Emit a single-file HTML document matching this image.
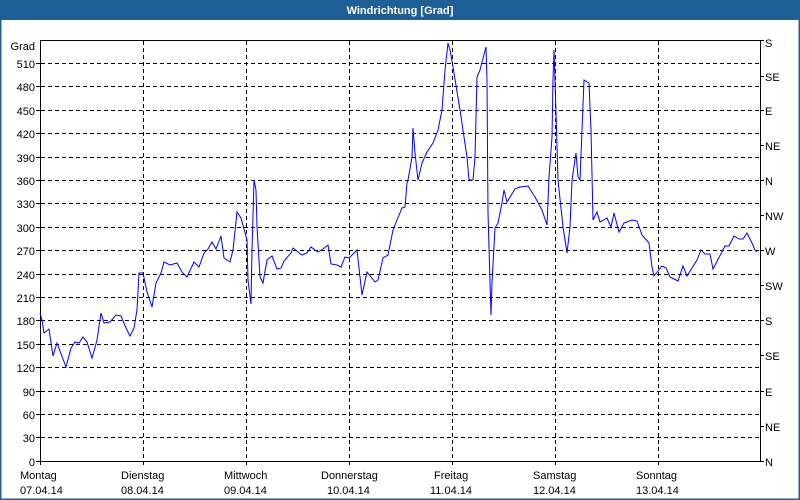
<!DOCTYPE html>
<html><head><meta charset="utf-8"><style>
html,body{margin:0;padding:0;background:#fff}
body{width:800px;height:500px;overflow:hidden;position:relative;font-family:"Liberation Sans",sans-serif}
</style></head><body>
<svg width="800" height="500" xmlns="http://www.w3.org/2000/svg" style="position:absolute;left:0;top:0">
<rect x="0" y="0" width="800" height="500" fill="#fff"/>
<rect x="0.5" y="0.5" width="799" height="499" fill="none" stroke="#1e6096" stroke-width="2"/>
<rect x="0" y="0" width="800" height="20" fill="#1e6096"/>
<text x="400" y="14" fill="#fff" font-size="11" font-weight="bold" text-anchor="middle">Windrichtung [Grad]</text>
<g stroke="#000" stroke-dasharray="4,3" stroke-width="1">
<line x1="41" x2="760" y1="63.5" y2="63.5"/><line x1="41" x2="760" y1="86.5" y2="86.5"/><line x1="41" x2="760" y1="110.5" y2="110.5"/><line x1="41" x2="760" y1="133.5" y2="133.5"/><line x1="41" x2="760" y1="157.5" y2="157.5"/><line x1="41" x2="760" y1="180.5" y2="180.5"/><line x1="41" x2="760" y1="203.5" y2="203.5"/><line x1="41" x2="760" y1="227.5" y2="227.5"/><line x1="41" x2="760" y1="250.5" y2="250.5"/><line x1="41" x2="760" y1="274.5" y2="274.5"/><line x1="41" x2="760" y1="297.5" y2="297.5"/><line x1="41" x2="760" y1="320.5" y2="320.5"/><line x1="41" x2="760" y1="344.5" y2="344.5"/><line x1="41" x2="760" y1="367.5" y2="367.5"/><line x1="41" x2="760" y1="391.5" y2="391.5"/><line x1="41" x2="760" y1="414.5" y2="414.5"/><line x1="41" x2="760" y1="437.5" y2="437.5"/>
<line y1="41" y2="461" x1="143.5" x2="143.5"/><line y1="41" y2="461" x1="246.5" x2="246.5"/><line y1="41" y2="461" x1="349.5" x2="349.5"/><line y1="41" y2="461" x1="452.5" x2="452.5"/><line y1="41" y2="461" x1="555.5" x2="555.5"/><line y1="41" y2="461" x1="658.5" x2="658.5"/>
</g>
<g stroke="#000" fill="none">
<path d="M40.5 40 V461.5 H760.5 V40 M40 40.5 H760.5"/>
<path d="M36 63.5h4M36 86.5h4M36 110.5h4M36 133.5h4M36 157.5h4M36 180.5h4M36 203.5h4M36 227.5h4M36 250.5h4M36 274.5h4M36 297.5h4M36 320.5h4M36 344.5h4M36 367.5h4M36 391.5h4M36 414.5h4M36 437.5h4M36 461.5h4"/>
<path d="M760 76.5h4M760 110.5h4M760 145.5h4M760 180.5h4M760 215.5h4M760 250.5h4M760 285.5h4M760 320.5h4M760 355.5h4M760 391.5h4M760 426.5h4M760 461.5h4M760 40.5h4"/>
<path d="M40.5 461v4M143.5 461v4M246.5 461v4M349.5 461v4M452.5 461v4M555.5 461v4M658.5 461v4"/>
</g>
<g font-size="11" fill="#000" text-anchor="end">
<text x="35" y="50">Grad</text>
<text x="35" y="68">510</text><text x="35" y="91">480</text><text x="35" y="115">450</text><text x="35" y="138">420</text><text x="35" y="162">390</text><text x="35" y="185">360</text><text x="35" y="208">330</text><text x="35" y="232">300</text><text x="35" y="255">270</text><text x="35" y="279">240</text><text x="35" y="302">210</text><text x="35" y="325">180</text><text x="35" y="349">150</text><text x="35" y="372">120</text><text x="35" y="396">90</text><text x="35" y="419">60</text><text x="35" y="442">30</text><text x="35" y="466">0</text>
</g>
<g font-size="11" fill="#000">
<text x="765" y="47">S</text><text x="765" y="81">SE</text><text x="765" y="115">E</text><text x="765" y="150">NE</text><text x="765" y="185">N</text><text x="765" y="220">NW</text><text x="765" y="255">W</text><text x="765" y="290">SW</text><text x="765" y="325">S</text><text x="765" y="360">SE</text><text x="765" y="396">E</text><text x="765" y="431">NE</text><text x="765" y="466">N</text>
</g>
<g font-size="11" fill="#000">
<text x="20" y="479">Montag</text><text x="20" y="494">07.04.14</text>
<text x="121" y="479">Dienstag</text><text x="121" y="494">08.04.14</text>
<text x="224" y="479">Mittwoch</text><text x="224" y="494">09.04.14</text>
<text x="321" y="479">Donnerstag</text><text x="327" y="494">10.04.14</text>
<text x="434" y="479">Freitag</text><text x="430" y="494">11.04.14</text>
<text x="533" y="479">Samstag</text><text x="533" y="494">12.04.14</text>
<text x="636" y="479">Sonntag</text><text x="636" y="494">13.04.14</text>
</g>
<polyline fill="none" stroke="#0000ff" stroke-width="1" points="40,313 42,320 44,333 49,329 53,356 57,343 66,367 71,348 75,342 79,343 83,337 87,342 92,358 97,340 101,313 104,323 110,322 116,315 121,316 126,328 130,336 134,328 137,310 139,273 143,273 147,292 152,307 156,283 161,273 164,262 170,265 177,263 182,272 187,277 194,262 199,267 204,253 208,249 212,242 216,249 221,236 224,258 230,262 233,250 237,212 241,218 247,240 248,280 251,304 252,250 254,180 256,190 257,227 260,277 263,283 267,260 272,256 277,269 281,268 284,261 291,253 293,248 302,255 307,253 311,247 318,252 323,249 328,245 331,264 337,265 341,267 345,257 349,258 357,250 359,268 362,295 367,272 375,282 378,280 383,258 388,255 393,230 397,220 402,208 405,207 407,183 408,180 412,157 413,128 415,153 418,180 422,163 427,152 433,143 438,130 442,110 445,70 448,43 450,50 453,67 460,110 467,157 469,180 473,180 475,157 477,77 480,70 486,47 487,80 488,213 491,315 492,283 495,228 498,223 502,203 504,190 507,202 515,189 520,187 528,186 535,197 542,210 547,225 549,177 552,137 553,80 554,50 555,80 558,180 563,227 567,253 570,227 572,180 576,153 578,177 580,180 584,80 589,83 591,130 593,220 597,212 600,222 607,218 611,227 614,213 619,232 624,223 632,220 637,221 642,235 649,243 652,267 654,276 662,266 666,268 670,277 678,281 683,266 687,276 697,260 701,250 705,254 710,254 713,269 725,246 729,246 734,236 739,239 743,239 747,233 752,243 755,250 757,252"/>
</svg>
</body></html>
